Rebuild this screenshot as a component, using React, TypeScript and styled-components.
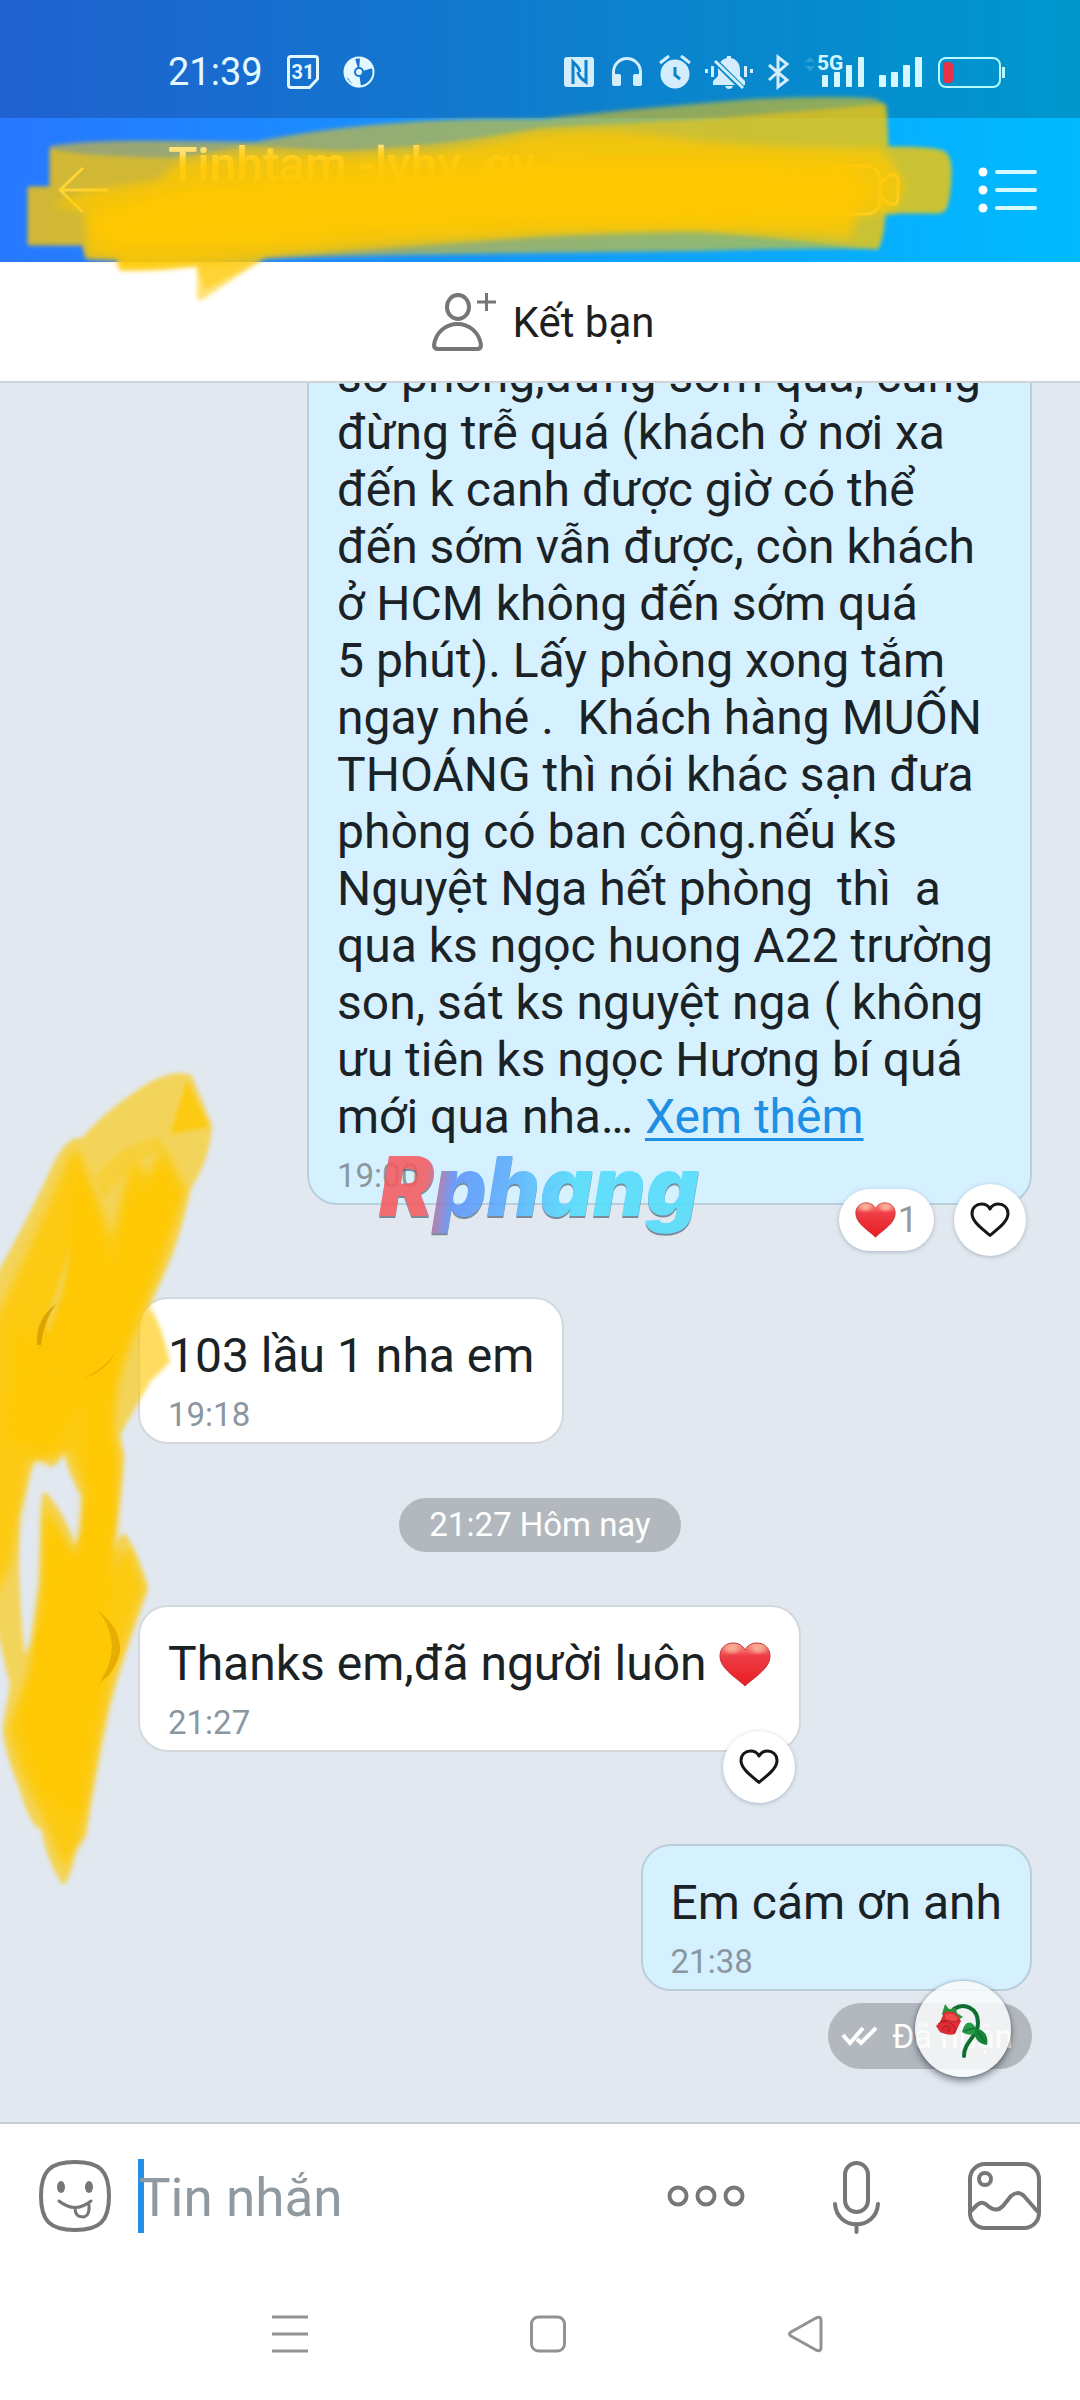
import React from 'react';
import styled, { createGlobalStyle } from 'styled-components';

const GlobalStyle = createGlobalStyle`
  * { box-sizing: border-box; }
  html, body { margin: 0; background: #ffffff; }
  body, button, input { font-family: Roboto, "Noto Sans", sans-serif; }
  button {
    margin: 0; padding: 0; border: 0; background: none; color: inherit;
    font-size: inherit; cursor: pointer;
  }
  svg { display: block; flex: none; overflow: visible; }
`;

const Screen = styled.div`
  position: relative;
  display: flex;
  flex-direction: column;
  height: 100vh;
  overflow: hidden;
  background: #fff;
`;

const Top = styled.header`
  position: relative;
  z-index: 2;
  flex: none;
  background: linear-gradient(90deg, #2878ff 0%, #1e86ff 22%, #0fa0fd 58%, #00bbfe 100%);
`;

const StatusBar = styled.div`
  display: flex;
  align-items: center;
  height: 118px;
  padding: 26px 75px 0 168px;
  background: rgba(0, 0, 0, 0.19);
  color: #e4f8ff;
`;

const Clock = styled.time`
  font-size: 38px;
  line-height: 44px;
`;

const StatusLeft = styled.div`
  display: flex;
  align-items: center;
  gap: 24px;
`;

const StatusRight = styled.div`
  display: flex;
  align-items: center;
  gap: 15px;
  margin-left: auto;
`;

const HeaderBar = styled.div`
  display: flex;
  align-items: center;
  height: 144px;
  padding: 0 40px 0 56px;
  color: #fff;
`;

const HeaderTitle = styled.div`
  display: flex;
  flex: 1;
  flex-direction: column;
  align-items: flex-start;
  gap: 8px;
  margin-left: 58px;
`;

const Name = styled.h1`
  margin: 0;
  font-size: 48px;
  line-height: 56px;
  font-weight: 500;
  white-space: pre;
`;

const Tag = styled.span`
  width: 162px;
  height: 42px;
  border-radius: 10px;
  background: rgba(255, 255, 255, 0.25);
`;

const HeaderActions = styled.div`
  display: flex;
  align-items: center;
  gap: 78px;
`;

const FriendBar = styled.button`
  display: flex;
  position: relative;
  flex: none;
  align-items: center;
  justify-content: center;
  gap: 17px;
  height: 121px;
  padding: 2px 0 0 6px;
  border-bottom: 2px solid #cfd4d8;
  background: #fff;
  color: #1f1f1f;
  font-size: 42px;
  line-height: 50px;
`;

const Chat = styled.main`
  position: relative;
  display: flex;
  flex: 1;
  flex-direction: column;
  justify-content: flex-end;
  min-height: 0;
  padding: 0 48px 53px 36px;
  overflow: hidden;
  background: #e1e8f0;
`;

const Row = styled.div<{ $mine?: boolean; $gap: number }>`
  display: flex;
  flex: none;
  align-items: flex-start;
  justify-content: ${p => (p.$mine ? 'flex-end' : 'flex-start')};
  gap: 18px;
  margin-top: ${p => p.$gap}px;
`;

const Bubble = styled.article<{ $mine?: boolean; $wide?: boolean }>`
  position: relative;
  width: ${p => (p.$wide ? 'calc(100% - 271px)' : 'auto')};
  padding: 28px 28px 8px;
  border: 2px solid ${p => (p.$mine ? '#b9cfdc' : '#d3d8dc')};
  border-radius: 30px;
  background: ${p => (p.$mine ? '#d5f0ff' : '#ffffff')};
`;

const Text = styled.p`
  margin: 0;
  color: #1b2226;
  font-size: 48px;
  line-height: 57px;
  white-space: pre-wrap;

  svg { display: inline-block; vertical-align: -7px; }
`;

const MoreLink = styled.a`
  color: #1f8fe4;
  text-decoration: underline;
  text-decoration-thickness: 3px;
  text-underline-offset: 5px;
`;

const Time = styled.time`
  display: block;
  margin-top: 11px;
  color: #8b979f;
  font-size: 33px;
  line-height: 39px;
`;

const Avatar = styled.div`
  width: 84px;
  height: 84px;
  border-radius: 50%;
  background: radial-gradient(circle at 60% 40%, #d8a94a 40%, #7a5526 100%);
`;

const Reactions = styled.div`
  position: absolute;
  right: 4px;
  bottom: -53px;
  display: flex;
  align-items: center;
  gap: 20px;
`;

const ReactionCount = styled.button`
  display: flex;
  align-items: center;
  gap: 2px;
  height: 62px;
  padding: 0 16px;
  border-radius: 31px;
  background: #fff;
  box-shadow: 0 1px 4px rgba(70, 90, 110, 0.35);
  color: #999;
  font-size: 36px;
  line-height: 42px;
`;

const HeartButton = styled.button`
  display: flex;
  align-items: center;
  justify-content: center;
  width: 72px;
  height: 72px;
  border-radius: 50%;
  background: #fff;
  box-shadow: 0 1px 4px rgba(70, 90, 110, 0.35);
`;

const DatePill = styled.div`
  flex: none;
  align-self: center;
  margin: 54px 0 0 12px;
  padding: 0 30px;
  border-radius: 27px;
  background: #b2b8be;
  color: #fff;
  font-size: 33px;
  line-height: 54px;
`;

const Receipt = styled.div`
  position: relative;
  display: flex;
  flex: none;
  align-items: center;
  align-self: flex-end;
  gap: 14px;
  height: 66px;
  margin-top: 12px;
  padding: 0 19px 0 13px;
  border-radius: 33px;
  background: #b2b8be;
  color: #fff;
  font-size: 33px;
  line-height: 39px;
`;

const RoseButton = styled.button`
  position: absolute;
  top: -22px;
  right: 21px;
  display: flex;
  align-items: center;
  justify-content: center;
  width: 96px;
  height: 96px;
  padding-top: 6px;
  border-radius: 50%;
  background: rgba(250, 251, 252, 0.84);
  box-shadow: 0 4px 7px rgba(40, 50, 60, 0.55), 0 0 3px rgba(40, 50, 60, 0.4);
`;

const Watermark = styled.div`
  position: absolute;
  left: 70px;
  bottom: -34px;
  padding-right: 6px;
  background: linear-gradient(97deg, #f35b5f 0 15%, #5c93fb 24%, #5aaefc 40%, #53dcfb 60%);
  background-clip: text;
  -webkit-background-clip: text;
  color: transparent;
  filter: drop-shadow(0 2px 0 rgba(70, 90, 110, 0.75));
  opacity: 0.88;
  font-family: Inter, "Liberation Sans", sans-serif;
  font-size: 82px;
  line-height: 100px;
  font-style: italic;
  font-weight: 900;
`;

const Composer = styled.form`
  display: flex;
  flex: none;
  align-items: center;
  height: 146px;
  padding: 0 39px;
  border-top: 2px solid #c9ced1;
  background: #fff;
`;

const MessageInput = styled.input`
  flex: 1;
  min-width: 0;
  height: 74px;
  margin-left: 27px;
  padding: 4px 0 0 1px;
  border: 0;
  outline: 0;
  background: linear-gradient(#248fe6, #248fe6) no-repeat left center / 6px 74px;
  color: #1f1f1f;
  font-size: 53px;

  &::placeholder { color: #8f999f; opacity: 1; }
`;

const ComposerActions = styled.div`
  display: flex;
  align-items: center;
  gap: 88px;
`;

const NavBar = styled.nav`
  display: grid;
  flex: none;
  grid-template-columns: repeat(3, 1fr);
  justify-items: center;
  align-items: center;
  height: 132px;
  padding: 0 145px 0 161px;
  background: #fff;
`;

const HeaderSmear = styled.svg`
  position: absolute;
  top: 0;
  left: 0;
  pointer-events: none;
`;

const ChatSmear = styled.svg`
  position: absolute;
  bottom: 0;
  left: 0;
  pointer-events: none;
`;

const HEART = 'M26 44 C18 36 1 27 1 14 C1 6 7 1 14 1 C20 1 24 4 26 8 C28 4 32 1 38 1 C45 1 51 6 51 14 C51 27 34 36 26 44Z';

function RedHeart({ width, height }: { width: number; height: number }) {
  return (
    <svg width={width} height={height} viewBox="0 0 52 45" preserveAspectRatio="none" role="img" aria-label="Trái tim">
      <defs>
        <linearGradient id="heartFill" x1="0" y1="0" x2="0" y2="1">
          <stop offset="0" stopColor="#f7a08a" />
          <stop offset="0.3" stopColor="#ef3d47" />
          <stop offset="1" stopColor="#e71d20" />
        </linearGradient>
        <filter id="shine"><feGaussianBlur stdDeviation="2" /></filter>
      </defs>
      <path d={HEART} fill="url(#heartFill)" stroke="#c2313a" strokeWidth="1" />
      <ellipse cx="13" cy="7" rx="7" ry="4" fill="#ffd9b8" opacity="0.6" filter="url(#shine)" />
      <ellipse cx="39" cy="7" rx="7" ry="4" fill="#ffd9b8" opacity="0.6" filter="url(#shine)" />
    </svg>
  );
}

function OutlineHeart() {
  return (
    <svg width="40" height="36" viewBox="0 0 40 36" fill="none" stroke="#161616" strokeWidth="3" strokeLinejoin="round">
      <path d="M20 33.500C13 27 2 20 2 11.500C2 5.500 6.500 2 11.500 2C15.500 2 18.500 4 20 7C21.500 4 24.500 2 28.500 2C33.500 2 38 5.500 38 11.500C38 20 27 27 20 33.500Z" />
    </svg>
  );
}

function CalendarIcon() {
  return (
    <svg width="32" height="34" viewBox="0 0 32 34" fill="none">
      <path d="M4 1.500H28Q30.500 1.500 30.500 4V24L22.500 32.500H4Q1.500 32.500 1.500 30V4Q1.500 1.500 4 1.500Z" stroke="#e4f8ff" strokeWidth="3" />
      <text x="16" y="24" textAnchor="middle" fill="#e4f8ff" fontFamily="Roboto, sans-serif" fontSize="20" fontWeight="700">31</text>
    </svg>
  );
}

function DiscIcon() {
  return (
    <svg width="32" height="32" viewBox="0 0 32 32">
      <circle cx="16" cy="16" r="14.500" fill="none" stroke="#e4f8ff" strokeWidth="2" />
      <path d="M16 16L12 2A15 15 0 0 0 2 20L9 26Z" fill="#e4f8ff" />
      <path d="M16 16L6 24L12 31A15 15 0 0 0 18 31Z" fill="#e4f8ff" />
      <path d="M16 16L17 1A15 15 0 0 1 30 12Z" fill="#e4f8ff" />
      <circle cx="16" cy="16" r="5" fill="#1974cd" />
      <circle cx="16" cy="16" r="3" fill="#e4f8ff" />
    </svg>
  );
}

function StatusIcons() {
  const c = '#d3edfd';
  return (
    <StatusRight>
      <svg width="33" height="34" viewBox="-3 -2 33 34">
        <rect width="30" height="30" rx="3" fill={c} />
        <path d="M9 27V5L13 9Q15 11 16 15M22 3V25L18 22Q14 18 14 15" fill="none" stroke="#0d7fcb" strokeWidth="3" />
      </svg>
      <svg width="33" height="34" viewBox="-3 -2 33 34">
        <path d="M1.500 20V15A13.500 13.500 0 0 1 28.500 15V20" fill="none" stroke={c} strokeWidth="3" />
        <rect x="0" y="17" width="9" height="12" rx="2" fill={c} />
        <rect x="21" y="17" width="9" height="12" rx="2" fill={c} />
      </svg>
      <svg width="33" height="34" viewBox="-3 -2 33 34">
        <circle cx="15" cy="17" r="14.500" fill={c} />
        <path d="M0 6L9 -1M30 6L21 -1" stroke={c} strokeWidth="3" />
        <path d="M15 10V18L20 22" fill="none" stroke="#0986cb" strokeWidth="3" />
      </svg>
      <svg width="48" height="34" viewBox="0 -2 48 34">
        <path d="M8 28V24L13 19V13C13 6 17 2 22 1V-1H26V1C31 2 35 6 35 13V19L40 24V28Z" fill={c} />
        <path d="M20 29H28Q27 32 24 32Q21 32 20 29Z" fill={c} />
        <path d="M9 3L37 31" stroke="#0787ca" strokeWidth="6" />
        <path d="M10 4L38 31" stroke={c} strokeWidth="3" />
        <path d="M1.500 12V16M7.500 9V20M40.500 9V20M46.500 12V16" stroke={c} strokeWidth="3" />
      </svg>
      <svg width="21" height="34" viewBox="0 -2 21 34" fill="none" stroke={c} strokeWidth="3">
        <path d="M1 8L19 23L10 30V0L19 7L1 23" />
      </svg>
      <svg width="60" height="34" viewBox="0 -2 60 34" fill="#d5f7ff">
        <path d="M1 5L6 0L11 5Z M1 9H11L6 14Z" fill="#2c9fd0" />
        <text x="13" y="13" fontFamily="Roboto, sans-serif" fontSize="21" fontWeight="700">5G</text>
        <rect x="18" y="18" width="6" height="12" rx="1" />
        <rect x="30" y="15" width="6" height="15" rx="1" />
        <rect x="42" y="8" width="6" height="22" rx="1" />
        <rect x="54" y="0" width="6" height="30" rx="1" />
      </svg>
      <svg width="44" height="34" viewBox="0 -2 44 34" fill="#d5f7ff">
        <rect x="0" y="18" width="7" height="12" rx="1" />
        <rect x="12" y="15" width="7" height="15" rx="1" />
        <rect x="24" y="8" width="7" height="22" rx="1" />
        <rect x="36" y="0" width="7" height="30" rx="1" />
      </svg>
      <svg width="67" height="34" viewBox="0 -2 67 34">
        <rect x="1" y="1" width="61" height="29" rx="7" fill="none" stroke="#b5fbff" strokeWidth="2" />
        <rect x="5" y="5" width="10" height="21" rx="4" fill="#e63244" />
        <path d="M65.500 10V21" stroke="#b5fbff" strokeWidth="3" />
      </svg>
    </StatusRight>
  );
}

function HeaderMarker() {
  const outer = 'M50 146Q90 140 170 141L255 142Q350 122 480 119L540 119Q640 108 740 100Q820 95 870 98Q885 100 886 110L888 147Q930 147 943 151Q951 155 951 170Q951 195 946 209Q944 214 930 213L885 213Q884 236 878 249Q800 248 700 251L540 253L400 255L265 258L205 298Q197 304 197 295L197 266Q155 272 120 270L118 260L86 259L83 245L28 245L28 187L50 187Z';
  const middle = 'M50 149Q80 156 170 158L250 146Q290 148 340 151Q430 148 540 128L720 118L886 104L888 147Q930 147 943 151Q951 155 951 170Q951 195 946 209Q944 214 930 213L885 213Q884 236 878 249Q790 240 700 230Q600 232 540 236L400 247L265 257L205 290L197 264Q155 270 120 269L118 259L86 258L83 245L28 245L28 187L50 187Z';
  const solid = 'M52 206L85 192Q120 186 160 180L176 164Q210 158 260 155Q350 158 440 152L540 134Q600 128 660 136Q740 148 880 148Q896 165 905 185L893 212L856 216L850 238Q770 232 680 230L540 234L400 243L275 254Q240 262 200 264L120 268L118 257L88 256L85 210Z';
  const core = 'M90 214L170 188L300 176L420 170L560 158L700 158L850 165L875 190L845 222L560 224L380 232L250 244L120 250L95 240Z';
  return (
    <HeaderSmear width="1080" height="310" viewBox="0 0 1080 310" aria-hidden="true">
      <defs>
        <filter id="edgeBlur"><feGaussianBlur stdDeviation="2" /></filter>
        <filter id="innerBlur"><feGaussianBlur stdDeviation="4" /></filter>
        <filter id="coreBlur"><feGaussianBlur stdDeviation="8" /></filter>
      </defs>
      <g fill="#ffc800">
        <path d={outer} opacity="0.54" filter="url(#edgeBlur)" />
        <path d={middle} opacity="0.54" filter="url(#edgeBlur)" />
        <path d={solid} opacity="0.72" filter="url(#innerBlur)" />
        <path d={core} opacity="0.95" filter="url(#coreBlur)" />
      </g>
    </HeaderSmear>
  );
}

function ChatMarker() {
  const hole = 'M34 1460Q44 1458 50 1467Q58 1466 64 1452Q68 1474 82 1497L82 1533L75 1545Q66 1515 47 1493L42 1493L40 1583L31 1643L25 1655Q18 1600 19 1517Z';
  const outer = 'M-10 1290L0 1268Q30 1215 55 1160Q68 1136 82 1138Q105 1110 150 1082Q178 1068 192 1076L212 1125Q210 1160 190 1190Q180 1240 165 1272L140 1325L150 1308Q160 1320 170 1362L150 1382L120 1435L124 1455Q122 1500 110 1550L114 1550Q118 1534 126 1534Q138 1555 148 1588Q125 1650 108 1710Q95 1770 86 1835L75 1850Q70 1886 62 1884Q46 1860 41 1828Q32 1832 18 1785Q2 1745 3 1725L10 1685L-10 1600Z';
  const solid = 'M72 1150L78 1150Q90 1180 100 1205L112 1240L128 1170L138 1160L148 1178L162 1145L186 1190Q165 1260 148 1300Q125 1355 118 1375L112 1430L120 1460Q114 1530 106 1580L128 1545L144 1588L112 1680L80 1840L64 1870L46 1825L20 1770L8 1728L30 1670L42 1580L44 1500L70 1548L80 1560L84 1490L68 1450L50 1460L28 1462L12 1560L-10 1610L-10 1330Q30 1250 72 1150Z';
  const core = 'M76 1160L98 1220L112 1270L134 1180L145 1200L160 1165L178 1195L130 1330L112 1400L116 1550L104 1660L78 1820L40 1790L20 1720L44 1620L48 1520L74 1560L90 1500L82 1400L50 1450L8 1440L16 1320L60 1380L66 1290Z';
  return (
    <ChatSmear width="230" height="1100" viewBox="0 1022 230 1100" aria-hidden="true">
      <defs>
        <filter id="strokeBlur"><feGaussianBlur stdDeviation="2" /></filter>
        <filter id="softBlur"><feGaussianBlur stdDeviation="5" /></filter>
      </defs>
      <g fill="#ffc805">
        <path d={`${outer} ${hole}`} fillRule="evenodd" opacity="0.62" filter="url(#strokeBlur)" />
        <path d={solid} opacity="0.8" filter="url(#softBlur)" />
        <path d="M187 1080L209 1127L170 1134Z" opacity="0.8" filter="url(#strokeBlur)" />
        <path d="M95 1176Q125 1140 160 1138L163 1150Q130 1160 104 1200Z" opacity="0.35" filter="url(#strokeBlur)" />
        <path d={core} opacity="0.85" filter="url(#softBlur)" />
        <circle cx="78" cy="1339" r="42" opacity="0.75" />
        <circle cx="78" cy="1647" r="42" opacity="0.75" />
      </g>
      <path d="M70 1245Q68 1290 48 1335Q44 1320 56 1290Z" fill="#f0d66c" opacity="0.6" filter="url(#strokeBlur)" />
      <g fill="#b97f00">
        <path d="M37 1345Q36 1318 56 1304Q44 1320 41 1345Z" opacity="0.5" />
        <path d="M84 1378Q112 1370 119 1342Q114 1364 84 1378Z" opacity="0.35" />
        <path d="M98 1611Q121 1628 120 1652Q114 1674 100 1682Q112 1664 112 1646Q111 1626 98 1611Z" opacity="0.35" />
      </g>
    </ChatSmear>
  );
}

function Rose() {
  return (
    <svg width="54" height="58" viewBox="0 0 54 58">
      <path d="M18 6C28 -1 42 5 42 20C42 34 28 38 28 53" fill="none" stroke="#0d7030" strokeWidth="4" strokeLinecap="round" />
      <path d="M6 11L9 1L13 6L20 5L21 10L27 14L22 17L8 14Z" fill="#2f9140" />
      <path d="M8 10Q16 6 22 13L25 18L22 24L19 31Q12 33 4 29L0 23L4 19Z" fill="#dc2b35" />
      <path d="M9 12Q16 8 22 15L20 20L10 18Z" fill="#ef4a4b" />
      <path d="M2 21Q9 16 16 21Q21 25 18 30M6 27Q8 21 13 24Q15 27 12 29M4 19L10 17L18 19L23 17" fill="none" stroke="#b51a26" strokeWidth="1" />
      <path d="M41 29C37 16 29 17 26 29C32 33 38 32 41 29Z" fill="#249a45" />
      <path d="M39 25C47 26 53 32 51 42C43 41 37 36 39 25Z" fill="#17843a" />
      <path d="M28 28L39 25M41 28L49 39" stroke="#0a6028" strokeWidth="1" />
    </svg>
  );
}

const LONG_MESSAGE = [
  'số phòng,đừng sớm quá, cũng',
  'đừng trễ quá (khách ở nơi xa',
  'đến k canh được giờ có thể',
  'đến sớm vẫn được, còn khách',
  'ở HCM không đến sớm quá',
  '5 phút). Lấy phòng xong tắm',
  'ngay nhé .  Khách hàng MUỐN',
  'THOÁNG thì nói khác sạn đưa',
  'phòng có ban công.nếu ks',
  'Nguyệt Nga hết phòng  thì  a',
  'qua ks ngọc huong A22 trường',
  'son, sát ks nguyệt nga ( không',
  'ưu tiên ks ngọc Hương bí quá',
  'mới qua nha… ',
].join('\n');

export default function App() {
  return (
    <Screen>
      <GlobalStyle />
      <Top>
        <StatusBar>
          <StatusLeft>
            <Clock>21:39</Clock>
            <CalendarIcon />
            <DiscIcon />
          </StatusLeft>
          <StatusIcons />
        </StatusBar>
        <HeaderBar>
          <button type="button" aria-label="Quay lại">
            <svg width="54" height="48" viewBox="0 0 54 48" fill="none" stroke="#fff" strokeWidth="3">
              <path d="M27 2L4 24L27 46M4 24H52" />
            </svg>
          </button>
          <HeaderTitle>
            <Name>Tinhtam -lyhy  gy-</Name>
            <Tag />
          </HeaderTitle>
          <HeaderActions>
            <button type="button" aria-label="Gọi video">
              <svg width="72" height="52" viewBox="0 0 72 52" fill="none" stroke="#fff" strokeWidth="3">
                <rect x="2" y="2" width="50" height="48" rx="14" />
                <path d="M52 20L60 12Q70 8 70 18V34Q70 43 60 39L52 32" />
              </svg>
            </button>
            <button type="button" aria-label="Tùy chọn">
              <svg width="62" height="48" viewBox="0 0 62 48" stroke="#d5fbff" strokeWidth="4" strokeLinecap="round">
                <path d="M19 6H57M19 24H57M19 42H57" />
                <g fill="#fff" stroke="none">
                  <circle cx="5" cy="6" r="4.500" />
                  <circle cx="5" cy="24" r="4.500" />
                  <circle cx="5" cy="42" r="4.500" />
                </g>
              </svg>
            </button>
          </HeaderActions>
        </HeaderBar>
        <HeaderMarker />
      </Top>

      <FriendBar type="button">
        <svg width="64" height="60" viewBox="0 0 64 60" fill="none" stroke="#767676" strokeWidth="4">
          <ellipse cx="26" cy="14" rx="11" ry="12" />
          <path d="M2 52C4 38 15 31 25.500 31C36 31 47 38 49 52Q49 56 45 56H6Q2 56 2 52Z" />
          <path d="M54.500 0V18M45 9H64" strokeWidth="3" />
        </svg>
        Kết bạn
      </FriendBar>

      <Chat>
        <Row $mine $gap={0}>
          <Bubble $mine $wide>
            <Text>
              {LONG_MESSAGE}
              <MoreLink href="#more">Xem thêm</MoreLink>
            </Text>
            <Time>19:00</Time>
            <Watermark>Rphang</Watermark>
            <Reactions>
              <ReactionCount type="button">
                <RedHeart width={41} height={36} />1
              </ReactionCount>
              <HeartButton type="button" aria-label="Thả tim"><OutlineHeart /></HeartButton>
            </Reactions>
          </Bubble>
        </Row>
        <Row $gap={92}>
          <Avatar />
          <Bubble>
            <Text>103 lầu 1 nha em</Text>
            <Time>19:18</Time>
          </Bubble>
        </Row>
        <DatePill>21:27 Hôm nay</DatePill>
        <Row $gap={53}>
          <Avatar />
          <Bubble>
            <Text>Thanks em,đã người luôn <RedHeart width={52} height={45} /></Text>
            <Time>21:27</Time>
            <Reactions>
              <HeartButton type="button" aria-label="Thả tim"><OutlineHeart /></HeartButton>
            </Reactions>
          </Bubble>
        </Row>
        <Row $mine $gap={92}>
          <Bubble $mine>
            <Text>Em cám ơn anh</Text>
            <Time>21:38</Time>
          </Bubble>
        </Row>
        <Receipt>
          <svg width="37" height="20" viewBox="0 0 37 20" fill="none" stroke="#fff" strokeWidth="4">
            <path d="M2 9L9 17L22 2M16 13L20 17L35 2" />
          </svg>
          Đã nhận
          <RoseButton type="button" aria-label="Hoa hồng"><Rose /></RoseButton>
        </Receipt>
        <ChatMarker />
      </Chat>

      <Composer onSubmit={e => e.preventDefault()}>
        <button type="button" aria-label="Biểu cảm">
          <svg width="72" height="72" viewBox="0 0 72 72" fill="none" stroke="#777" strokeWidth="4">
            <path d="M36 2C61 2 70 11 70 36C70 61 61 70 36 70C11 70 2 61 2 36C2 11 11 2 36 2Z" />
            <path d="M20 41Q36 54 52 41M36 48Q36 57 44 57Q51 56 50 45" strokeWidth="3" strokeLinecap="round" />
            <g fill="#777" stroke="none">
              <ellipse cx="22" cy="27" rx="4" ry="6" />
              <ellipse cx="50" cy="27" rx="4" ry="6" />
            </g>
          </svg>
        </button>
        <MessageInput type="text" aria-label="Tin nhắn" placeholder="Tin nhắn" />
        <ComposerActions>
          <button type="button" aria-label="Thêm">
            <svg width="78" height="22" viewBox="0 0 78 22" fill="none" stroke="#777" strokeWidth="4">
              <circle cx="11" cy="11" r="8.500" />
              <circle cx="39" cy="11" r="8.500" />
              <circle cx="67" cy="11" r="8.500" />
            </svg>
          </button>
          <button type="button" aria-label="Ghi âm">
            <svg width="47" height="70" viewBox="0 -2 47 70" fill="none" stroke="#777" strokeWidth="4" strokeLinecap="round">
              <rect x="12" y="0" width="23" height="49" rx="11.500" />
              <path d="M2 41C4 68 43 68 45 41M23.500 61V69" />
            </svg>
          </button>
          <button type="button" aria-label="Gửi ảnh">
            <svg width="73" height="68" viewBox="0 0 73 68" fill="none" stroke="#777" strokeWidth="4">
              <rect x="2" y="2" width="69" height="64" rx="15" />
              <circle cx="17" cy="17" r="6" />
              <path d="M3 49L9 43Q14 38 20 44Q28 51 35 44L43 34Q50 28 56 34L70 50" />
            </svg>
          </button>
        </ComposerActions>
      </Composer>

      <NavBar aria-label="Điều hướng">
        <button type="button" aria-label="Gần đây">
          <svg width="36" height="38" viewBox="0 0 36 38" stroke="#929292" strokeWidth="3">
            <path d="M0 2H36M0 19H36M0 36H36" />
          </svg>
        </button>
        <button type="button" aria-label="Trang chủ">
          <svg width="36" height="38" viewBox="0 0 36 38" fill="none" stroke="#929292" strokeWidth="3">
            <rect x="1.500" y="2" width="33" height="34" rx="7" />
          </svg>
        </button>
        <button type="button" aria-label="Trở về">
          <svg width="36" height="38" viewBox="0 0 36 38" fill="none" stroke="#929292" strokeWidth="3" strokeLinejoin="round">
            <path d="M3 17L28 3Q33 1 33 5V33Q33 37 28 35L3 21Q0 19 3 17Z" />
          </svg>
        </button>
      </NavBar>
    </Screen>
  );
}
